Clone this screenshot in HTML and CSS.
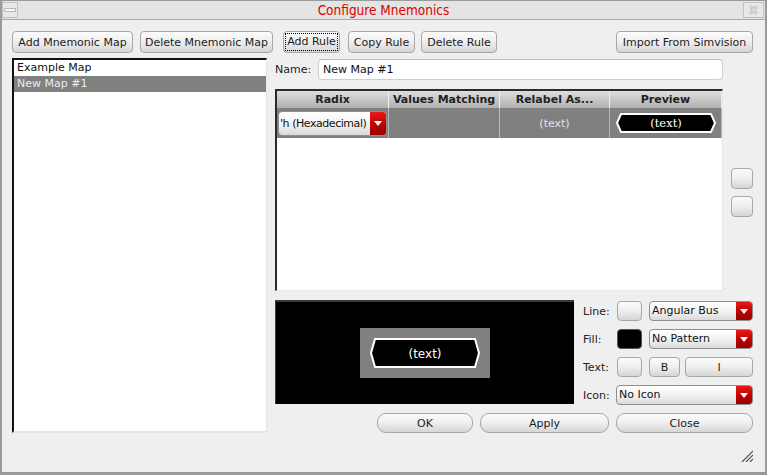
FILE: index.html
```html
<!DOCTYPE html>
<html>
<head>
<meta charset="utf-8">
<title>Configure Mnemonics</title>
<link rel="stylesheet" href="styles.css">
</head>
<body>
<div class="window">
  <div class="titlebar">
    <div class="tb-btn tb-min"><svg width="12" height="4" viewBox="0 0 12 4"><rect x="0.5" y="0.5" width="11" height="3" fill="#f4f4f4" stroke="#b8b8b8"/></svg></div>
    <div class="title">Configure Mnemonics</div>
    <div class="tb-btn tb-close"><svg width="11" height="12" viewBox="0 0 11 12"><path d="M2 2 L9 10 M9 2 L2 10" stroke="#bdbdbd" stroke-width="3" fill="none"/><path d="M2 2 L9 10 M9 2 L2 10" stroke="#f2f2f2" stroke-width="1" fill="none"/></svg></div>
  </div>
  <div class="content">
    <div class="toolbar">
      <button class="btn w-addmap">Add Mnemonic Map</button>
      <button class="btn w-delmap">Delete Mnemonic Map</button>
      <button class="btn w-addrule"><span class="focus">Add Rule</span></button>
      <button class="btn w-copyrule">Copy Rule</button>
      <button class="btn w-delrule">Delete Rule</button>
      <span class="spacer"></span>
      <button class="btn w-import">Import From Simvision</button>
    </div>
    <div class="main">
      <div class="list">
        <div class="item">Example Map</div>
        <div class="item selected">New Map #1</div>
      </div>
      <div class="right">
        <div class="name-row">
          <span class="name-label">Name:</span>
          <div class="input">New Map #1</div>
        </div>
        <div class="table-row">
          <div class="table">
            <div class="thead">
              <div class="th">Radix</div>
              <div class="th">Values Matching</div>
              <div class="th">Relabel As...</div>
              <div class="th">Preview</div>
            </div>
            <div class="trow">
              <div class="td td-radix">
                <div class="combo combo-radix"><span class="combo-text">'h (Hexadecimal)</span><span class="combo-btn"><svg width="8" height="5" viewBox="0 0 8 5"><path d="M0 0 H8 L4 5 Z" fill="#fff"/></svg></span></div>
              </div>
              <div class="td"></div>
              <div class="td td-text">(text)</div>
              <div class="td td-preview">
                <svg width="100" height="20" viewBox="0 0 100 20"><polygon points="5,1 95,1 99,10 95,19 5,19 1,10" fill="#000" stroke="#fff" stroke-width="2"/><text class="hex-serif" x="50" y="14" text-anchor="middle">(text)</text></svg>
              </div>
            </div>
          </div>
          <div class="side">
            <button class="btn side-btn"></button>
            <button class="btn side-btn"></button>
          </div>
        </div>
        <div class="bottom">
          <div class="canvas">
            <div class="canvas-box">
              <svg width="110" height="30" viewBox="0 0 110 30"><polygon points="5,1 105,1 109,15 105,29 5,29 1,15" fill="#000" stroke="#fff" stroke-width="2"/><text class="hex-sans" x="55" y="19.5" text-anchor="middle">(text)</text></svg>
            </div>
          </div>
          <div class="controls">
            <div class="ctl-row">
              <span class="ctl-label">Line:</span>
              <button class="btn swatch"></button>
              <div class="combo combo-flex"><span class="combo-text">Angular Bus</span><span class="combo-btn"><svg width="8" height="5" viewBox="0 0 8 5"><path d="M0 0 H8 L4 5 Z" fill="#fff"/></svg></span></div>
            </div>
            <div class="ctl-row">
              <span class="ctl-label">Fill:</span>
              <button class="btn swatch swatch-black"></button>
              <div class="combo combo-flex"><span class="combo-text">No Pattern</span><span class="combo-btn"><svg width="8" height="5" viewBox="0 0 8 5"><path d="M0 0 H8 L4 5 Z" fill="#fff"/></svg></span></div>
            </div>
            <div class="ctl-row">
              <span class="ctl-label">Text:</span>
              <button class="btn swatch"></button>
              <button class="btn btn-b">B</button>
              <button class="btn btn-i">I</button>
            </div>
            <div class="ctl-row">
              <span class="ctl-label icon-label">Icon:</span>
              <div class="combo combo-flex"><span class="combo-text">No Icon</span><span class="combo-btn"><svg width="8" height="5" viewBox="0 0 8 5"><path d="M0 0 H8 L4 5 Z" fill="#fff"/></svg></span></div>
            </div>
          </div>
        </div>
        <div class="actions">
          <button class="btn pill w-ok">OK</button>
          <button class="btn pill w-apply">Apply</button>
          <button class="btn pill w-close">Close</button>
        </div>
      </div>
    </div>
  </div>
  <div class="grip"><svg width="12" height="12" viewBox="0 0 12 12"><path d="M1 12 L12 1 M5 12 L12 5 M9 12 L12 9" stroke="#555" stroke-width="1.2" fill="none"/></svg></div>
</div>
</body>
</html>
```

FILE: styles.css
```css
* { box-sizing: border-box; }
html, body { margin: 0; padding: 0; }
body {
  width: 767px;
  height: 475px;
  overflow: hidden;
  background: #efefef;
  font-family: "DejaVu Sans", sans-serif;
  font-size: 11px;
  color: #1c1c1c;
}
.window {
  position: relative;
  width: 767px;
  height: 475px;
  background: #efefef;
  border-left: 2px solid #9a9a9a;
  border-right: 2px solid #9a9a9a;
  border-top: 1px solid #9a9a9a;
  border-bottom: 3px solid #9a9a9a;
  display: flex;
  flex-direction: column;
}
.titlebar {
  height: 19px;
  display: flex;
  background: #e4e4e4;
  border-bottom: 1px solid #a9a9a9;
}
.tb-btn {
  width: 16px;
  height: 16px;
  margin-top: 1px;
  border: 1px solid #c2c2c2;
  background: #e8e8e8;
  display: flex;
  align-items: center;
  justify-content: center;
}
.tb-close { width: 21px; margin-right: 1px; }
.title {
  flex: 1;
  text-align: center;
  padding-left: 6px;
  color: #e00000;
  font-family: "DejaVu Sans Condensed", "DejaVu Sans", sans-serif;
  font-stretch: condensed;
  font-size: 13.5px;
  line-height: 19px;
}
.content {
  flex: 1;
  padding: 11px 12px 0 10px;
  display: flex;
  flex-direction: column;
}
.toolbar { display: flex; height: 22px; }
.spacer { flex: 1; }
.btn {
  font: inherit;
  color: #1c1c1c;
  padding: 0;
  margin: 0;
  height: 22px;
  border: 1px solid #a8a8a8;
  border-radius: 4px;
  background: linear-gradient(#fbfbfb, #f0f0f0 45%, #d6d6d6);
  display: flex;
  align-items: center;
  justify-content: center;
  white-space: nowrap;
}
.w-addmap { width: 121px; }
.w-delmap { width: 133px; margin-left: 7px; }
.w-addrule { width: 57px; margin-left: 10px; }
.w-copyrule { width: 67px; margin-left: 8px; }
.w-delrule { width: 76px; margin-left: 6px; }
.w-import { width: 137px; }
.focus {
  border: 1px dotted #000;
  padding: 1px 1px;
  line-height: 14px;
}
.main {
  display: flex;
  gap: 8px;
  margin-top: 5px;
  height: 375px;
}
.list {
  width: 255px;
  height: 375px;
  background: #fff;
  border-top: 2px solid #111;
  border-left: 2px solid #111;
  border-right: 1px solid #e4e4e4;
  border-bottom: 2px solid #e4e4e4;
}
.item {
  height: 16px;
  line-height: 16px;
  padding-left: 3px;
  color: #111;
}
.item.selected { background: #808080; color: #ececec; }
.right {
  width: 478px;
  display: flex;
  flex-direction: column;
}
.name-row {
  display: flex;
  align-items: center;
  height: 21px;
  margin-top: 1px;
  width: 448px;
}
.name-label { width: 43px; color: #222; }
.input {
  flex: 1;
  height: 21px;
  background: #fff;
  border: 1px solid #cfcfcf;
  border-top-color: #bdbdbd;
  border-radius: 4px;
  padding-left: 4px;
  line-height: 19px;
  color: #111;
}
.table-row {
  display: flex;
  gap: 8px;
  margin-top: 9px;
}
.table {
  width: 448px;
  height: 202px;
  background: #fff;
  border-top: 2px solid #2a2a2a;
  border-left: 2px solid #2a2a2a;
  border-right: 1px solid #e6e6e6;
  border-bottom: 1px solid #e6e6e6;
}
.thead, .trow {
  display: grid;
  grid-template-columns: 112px 111px 110px 112px;
}
.th {
  height: 17px;
  line-height: 17px;
  text-align: center;
  font-weight: bold;
  color: #222;
  background: linear-gradient(#dedede, #b0b0b0);
  border-right: 1px solid #ededed;
  white-space: nowrap;
  overflow: hidden;
}
.trow { height: 30px; background: #808080; }
.td {
  height: 30px;
  border-right: 1px solid #b8b8b8;
  display: flex;
  align-items: center;
  justify-content: center;
}
.td-radix { justify-content: flex-start; padding-left: 1px; }
.td-text { color: #e2e2e2; }
.hex-serif { fill: #fff; font-family: "DejaVu Serif", serif; font-size: 11.5px; }
.hex-sans { fill: #fff; font-family: "DejaVu Sans", sans-serif; font-size: 12px; }
.combo {
  display: flex;
  height: 20px;
  border: 1px solid #8e8e8e;
  border-radius: 4px;
  background: linear-gradient(#ffffff, #f3f3f3 50%, #dadada);
  overflow: hidden;
}
.combo-text {
  flex: 1;
  min-width: 0;
  padding-left: 2px;
  line-height: 18px;
  white-space: nowrap;
  overflow: hidden;
  color: #111;
}
.combo-btn {
  width: 16px;
  flex: none;
  background: linear-gradient(#e81818, #b80000 60%, #9a0000);
  display: flex;
  align-items: center;
  justify-content: center;
}
.combo-radix {
  width: 109px;
  height: 25px;
}
.combo-radix .combo-text {
  line-height: 23px;
  padding-left: 1px;
  letter-spacing: -0.45px;
  overflow: visible;
}
.side {
  display: flex;
  flex-direction: column;
  gap: 7px;
  padding-top: 79px;
}
.side-btn { width: 22px; height: 21px; }
.bottom {
  display: flex;
  margin-top: 9px;
  height: 105px;
}
.canvas {
  width: 299px;
  height: 104px;
  background: #000;
  border-top: 2px solid #3a3a3a;
  border-left: 1px solid #3a3a3a;
  display: flex;
  align-items: center;
  justify-content: center;
}
.canvas-box {
  width: 130px;
  height: 50px;
  background: #808080;
  display: flex;
  align-items: center;
  justify-content: center;
}
.controls {
  width: 170px;
  margin-left: 9px;
  margin-top: 1px;
  display: flex;
  flex-direction: column;
  gap: 8px;
}
.ctl-row {
  display: flex;
  align-items: center;
  height: 20px;
}
.ctl-label { width: 34px; color: #222; }
.icon-label { width: 33px; }
.swatch { width: 25px; height: 20px; margin-right: 7px; }
.swatch-black { background: #000; border-color: #555; }
.combo-flex { flex: 1; }
.btn-b { width: 31px; height: 20px; margin-right: 5px; }
.btn-i { flex: 1; height: 20px; }
.actions {
  display: flex;
  justify-content: flex-end;
  gap: 7px;
  margin-top: 8px;
}
.pill { height: 20px; border-radius: 9px; }
.w-ok { width: 96px; }
.w-apply { width: 129px; }
.w-close { width: 137px; }
.grip {
  position: absolute;
  right: 12px;
  bottom: 10px;
  width: 12px;
  height: 12px;
}
```
